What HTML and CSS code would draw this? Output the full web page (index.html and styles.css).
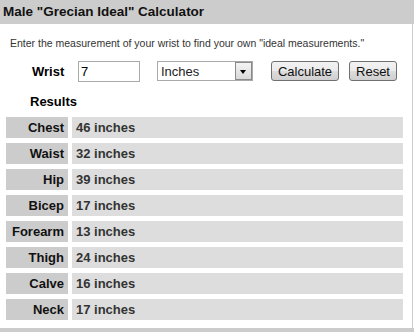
FILE: index.html
```html
<!DOCTYPE html>
<html>
<head>
    <title>Male "Grecian Ideal" Calculator</title>
    <link rel="stylesheet" href="styles.css">
</head>
<body>
<div class="calc-title">Male "Grecian Ideal" Calculator</div>
<div class="calc-body">
    <div class="intro">Enter the measurement of your wrist to find your own "ideal measurements."</div>
    <div class="wrist-row">
        <label class="wrist-label" for="wrist">Wrist</label>
        <input type="text" id="wrist" class="wrist-input" value="7">
        <div class="unit-select">
            <select class="unit">
                <option>Inches</option>
                <option>Centimeters</option>
            </select>
            <span class="unit-arrow"></span>
        </div>
        <button class="btn btn-calc">Calculate</button>
        <button class="btn btn-reset">Reset</button>
    </div>
    <div class="results-title">Results</div>
    <div class="results">
        <div class="res-label">Chest</div><div class="res-value">46 inches</div>
        <div class="res-label">Waist</div><div class="res-value">32 inches</div>
        <div class="res-label">Hip</div><div class="res-value">39 inches</div>
        <div class="res-label">Bicep</div><div class="res-value">17 inches</div>
        <div class="res-label">Forearm</div><div class="res-value">13 inches</div>
        <div class="res-label">Thigh</div><div class="res-value">24 inches</div>
        <div class="res-label">Calve</div><div class="res-value">16 inches</div>
        <div class="res-label">Neck</div><div class="res-value">17 inches</div>
    </div>
</div>
<div class="calc-foot"></div>
</body>
</html>
```
FILE: styles.css
```css
* {
    box-sizing: border-box;
}
body {
    margin: 0;
    background: #fff;
    font-family: "Liberation Sans", Arial, sans-serif;
    color: #000;
}
.calc-title {
    height: 24px;
    background-color: #cccccc;
    padding: 4px 0 0 3px;
    font-size: 13.5px;
    font-weight: bold;
    color: #111;
}
.calc-body {
    width: 413px;
    height: 304px;
    border-right: 1px solid #cccccc;
    padding-top: 13px;
}
.intro {
    font-size: 10.5px;
    color: #333;
    padding-left: 10px;
    height: 23px;
}
.wrist-row {
    display: flex;
    align-items: center;
    height: 22px;
}
.wrist-label {
    font-size: 13px;
    font-weight: bold;
    margin-left: 32px;
    width: 46px;
}
.wrist-input {
    width: 62px;
    height: 21px;
    border: 1px solid #a9a9a9;
    font-family: "Liberation Sans", Arial, sans-serif;
    font-size: 13px;
    padding: 1px 2px;
    margin: 0;
}
.unit-select {
    position: relative;
    margin-left: 17px;
    width: 96px;
    height: 20px;
}
.unit {
    appearance: none;
    -webkit-appearance: none;
    width: 96px;
    height: 20px;
    border: 1px solid #a9a9a9;
    background: #fff;
    font-family: "Liberation Sans", Arial, sans-serif;
    font-size: 13px;
    color: #222;
    padding: 0 0 0 3px;
    border-radius: 0;
    margin: 0;
}
.unit-arrow {
    position: absolute;
    right: 1px;
    top: 1px;
    width: 17px;
    height: 18px;
    border: 1px solid #8a8a8a;
    background: linear-gradient(#f4f4f4, #d8d8d8);
}
.unit-arrow:after {
    content: '';
    position: absolute;
    left: 4px;
    top: 7px;
    border-left: 3.5px solid transparent;
    border-right: 3.5px solid transparent;
    border-top: 4px solid #000;
}
.btn {
    height: 20px;
    font-family: "Liberation Sans", Arial, sans-serif;
    font-size: 13px;
    color: #111;
    border: 1px solid #707070;
    border-radius: 3px;
    background: linear-gradient(#f2f2f2 0%, #ebebeb 50%, #dddddd 51%, #cfcfcf 100%);
    padding: 0 5px;
    margin: 0;
}
.btn-calc {
    margin-left: 18px;
    width: 68px;
}
.btn-reset {
    margin-left: 10px;
    width: 48px;
}
.results-title {
    font-size: 13px;
    font-weight: bold;
    padding-left: 30px;
    margin-top: 12px;
    height: 18px;
}
.results {
    display: grid;
    grid-template-columns: 62px 331px;
    grid-auto-rows: 21px;
    column-gap: 4px;
    row-gap: 5px;
    margin-left: 6px;
    margin-top: 5px;
    font-size: 13px;
    font-weight: bold;
}
.res-label {
    background-color: #cccccc;
    text-align: right;
    padding: 3px 4px 0 0;
    color: #111;
}
.res-value {
    background-color: #dddddd;
    padding: 3px 0 0 4px;
    color: #333;
}
.calc-foot {
    height: 4px;
    background-color: #cccccc;
}
```
